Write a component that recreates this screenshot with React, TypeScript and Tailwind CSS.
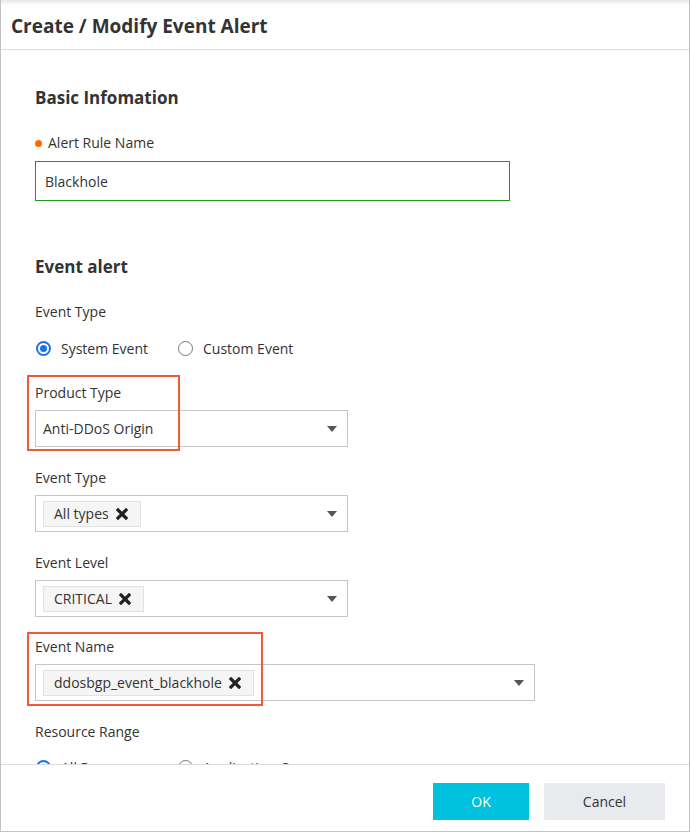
import React from "react";

const Caret = () => (
  <svg width="10" height="6" viewBox="0 0 10 6" className="shrink-0">
    <path d="M0 0 L10 0 L5 6 Z" fill="#555" />
  </svg>
);

const XIcon = () => (
  <svg width="12" height="12" viewBox="0 0 12 12" className="shrink-0">
    <path d="M2 2 L10 10 M10 2 L2 10" stroke="#222" strokeWidth="3.2" strokeLinecap="square" />
  </svg>
);

const Tag = ({ text }: { text: string }) => (
  <div className="flex h-[26px] items-center gap-[7px] border border-[#e2e2e2] bg-[#f5f5f5] pl-[10px] pr-[12px] text-[14px] text-[#333]">
    <span>{text}</span>
    <XIcon />
  </div>
);

const Radio = ({ checked, label }: { checked?: boolean; label: string }) => (
  <label className="flex items-center gap-[10px] text-[14px] text-[#333]">
    {checked ? (
      <span className="flex h-[15px] w-[15px] items-center justify-center rounded-full border-2 border-[#1a73e8]">
        <span className="h-[7px] w-[7px] rounded-full bg-[#1a73e8]" />
      </span>
    ) : (
      <span className="h-[15px] w-[15px] rounded-full border border-[#777]" />
    )}
    <span>{label}</span>
  </label>
);

const Select = ({ width, children }: { width: string; children: React.ReactNode }) => (
  <div className={`mt-[7px] flex h-[37px] items-center justify-between border border-[#c6c6c6] bg-white pl-[7px] pr-[10px] ${width}`}>
    <div className="flex items-center text-[14px] text-[#333]">{children}</div>
    <Caret />
  </div>
);

export default function App() {
  return (
    <div
      className="flex h-[832px] w-[690px] flex-col overflow-hidden border-r border-b border-l border-[#c2c2c2] bg-white"
      style={{ fontFamily: '"Open Sans", "Noto Sans", sans-serif' }}
    >
      {/* Header */}
      <div className="flex h-[50px] shrink-0 items-center border-b border-[#dcdcdc] pl-[10px] pt-[3px] shadow-[inset_0_5px_4px_-3px_rgba(0,0,0,0.12)]">
        <h1 className="text-[19px] font-bold text-[#333]">Create / Modify Event Alert</h1>
      </div>

      {/* Body */}
      <div className="flex-1 overflow-hidden pl-[34px] pt-[36px]">
        <h2 className="h-6 text-[17px] font-bold leading-6 text-[#333]">Basic Infomation</h2>

        <div className="mt-[23px] flex h-5 items-center text-[14px] leading-5 text-[#333]">
          <span className="mr-[6px] h-[7px] w-[7px] rounded-full bg-[#ff6a00]" />
          Alert Rule Name
        </div>
        <div className="mt-[8px] flex h-[40px] w-[475px] items-center border border-[#1f9a1f] pl-[9px] text-[14px] text-[#333]">
          Blackhole
        </div>

        <h2 className="mt-[54px] h-6 text-[17px] font-bold leading-6 text-[#333]">Event alert</h2>

        <div className="mt-[23px] h-5 text-[14px] leading-5 text-[#333]">Event Type</div>
        <div className="mt-4 flex h-5 items-center gap-[30px] pl-[1px]">
          <Radio checked label="System Event" />
          <Radio label="Custom Event" />
        </div>

        <div className="relative mt-[25px]">
          <div className="pointer-events-none absolute left-[-8px] top-[-8px] h-[76px] w-[153px] border-2 border-[#f05a38]" />
          <div className="h-5 text-[14px] leading-5 text-[#333]">Product Type</div>
          <Select width="w-[313px]">Anti-DDoS Origin</Select>
        </div>

        <div className="mt-[21px]">
          <div className="h-5 text-[14px] leading-5 text-[#333]">Event Type</div>
          <Select width="w-[313px]">
            <Tag text="All types" />
          </Select>
        </div>

        <div className="mt-[21px]">
          <div className="h-5 text-[14px] leading-5 text-[#333]">Event Level</div>
          <Select width="w-[313px]">
            <Tag text="CRITICAL" />
          </Select>
        </div>

        <div className="relative mt-[20px]">
          <div className="pointer-events-none absolute left-[-8px] top-[-5px] h-[74px] w-[236px] border-2 border-[#f05a38]" />
          <div className="h-5 text-[14px] leading-5 text-[#333]">Event Name</div>
          <Select width="w-[500px]">
            <Tag text="ddosbgp_event_blackhole" />
          </Select>
        </div>

        <div className="mt-[21px] h-5 text-[14px] leading-5 text-[#333]">Resource Range</div>
        <div className="mt-[15px] flex h-5 items-center gap-[30px] pl-[1px]">
          <Radio checked label="All Resources" />
          <Radio label="Application Groups" />
        </div>
      </div>

      {/* Footer */}
      <div className="flex h-[67px] shrink-0 items-start justify-end gap-[15px] border-t border-[#dcdcdc] pr-[24px] pt-[18px]">
        <button className="h-[37px] w-[96px] bg-[#00c1de] text-[14px] text-white">OK</button>
        <button className="h-[37px] w-[121px] bg-[#e9eaee] text-[14px] text-[#333]">Cancel</button>
      </div>
    </div>
  );
}
